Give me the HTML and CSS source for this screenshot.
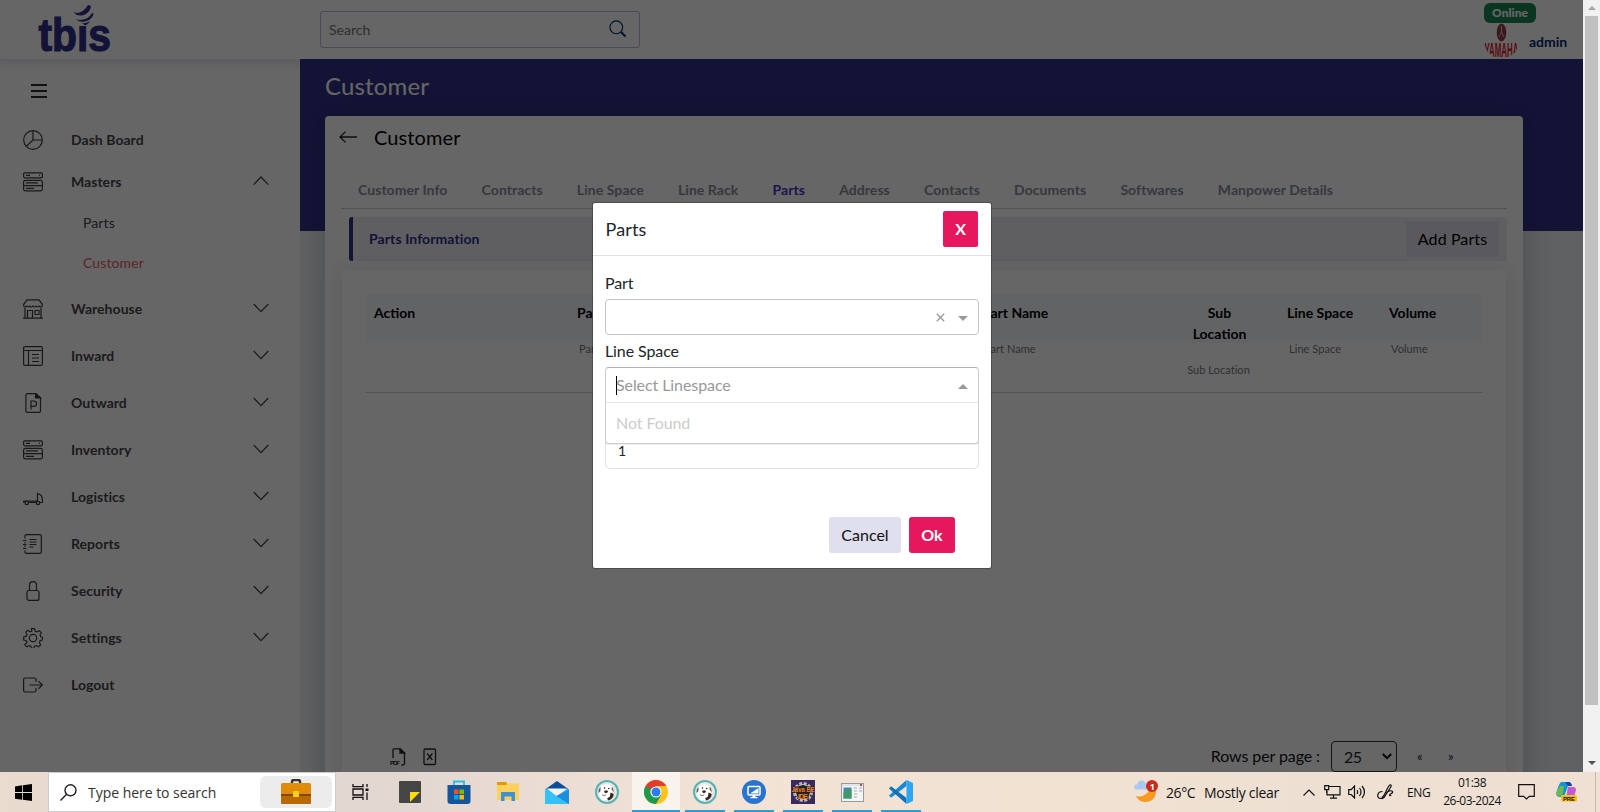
FILE: index.html
```html
<!DOCTYPE html>
<html lang="en">
<head>
<meta charset="utf-8">
<title>Customer</title>
<link rel="stylesheet" href="styles.css">
</head>
<body>
<svg class="defs" width="0" height="0">
  <symbol id="down" viewBox="0 0 16 10"><path d="M.7 1 8 8.600 15.300 1"/></symbol>
  <symbol id="up" viewBox="0 0 16 10"><path d="M.7 8.600 8 1l7.300 7.600"/></symbol>
  <symbol id="rack" viewBox="0 0 20 20"><rect x=".6" y=".8" width="18.800" height="5" rx="1.200"/><rect x=".6" y="8.300" width="18.800" height="10.600" rx="1.800"/><path d="M.6 13.600h18.800M3 3.300h4M16 3.300h1M3 10.900h12M3 16.300h8"/></symbol>
  <symbol id="beaver" viewBox="0 0 24 24"><circle cx="12" cy="12" r="11" fill="#e9e5e0" stroke="#51b5b8" stroke-width="2"/><path d="M8 5c3-1.500 7-.8 8.500 1.500 1.500 2 1 4 .5 6l-3 7-6 1c-2.500-2-4-4-4-7C4 9.500 5.500 6.500 8 5z" fill="#fff"/><path d="M5.500 7c-1.800 1.500-2.300 4-1.800 6l1.800-2z" fill="#6a5a52"/><path d="m16.500 7 1.500 1 .8 4-2-2z" fill="#6a5a52"/><circle cx="9.500" cy="8" r=".8" fill="#222"/><circle cx="13.800" cy="8.500" r=".8" fill="#222"/><path d="M9.500 10.500h3l.5 1.500-2 1.200-1.800-1z" fill="#35241f"/><path d="m15.500 12.500 3 1.500c.5 2.500-1.500 5-5 6.500l-1.500-2 3-2z" fill="#35241f"/><path d="M7 14.500c1.500 1.500 3 1.500 4.200 0" fill="none" stroke="#554a44" stroke-width=".8"/></symbol>
</svg>

<div class="screen">
  <div class="window">
    <div class="app">
      <header class="topbar">
        <div class="brand">
          <svg width="76" height="56" viewBox="0 0 76 56"><text x="2.500" y="50" font-size="46" textLength="72.500" lengthAdjust="spacingAndGlyphs">tbis</text><rect class="gap" x="42" y="13" width="11.500" height="12"/><path d="M37.500 10c2 4 10 2 14.500-6l3 1c-1 10-15 13-17.500 5z"/><path d="M40 18.500c7 1.500 13-1 16-6.500l1.500.5C57 19 47 23.500 40 18.500z"/><path d="M46 22.300c3.500 0 6-.8 8-2.400-1 2.400-3 3.600-5 4.400z"/></svg>
        </div>
        <div class="search"><span>Search</span>
          <svg width="18" height="18" viewBox="0 0 18 18"><circle cx="7.300" cy="7.300" r="6.400"/><path class="thick" d="m12 12 4.500 4.500"/></svg>
        </div>
        <div class="user">
          <span class="online">Online</span>
          <div class="who">
            <svg width="35" height="36" viewBox="0 0 35 36"><ellipse cx="17.500" cy="9.500" rx="4.800" ry="9" fill="#9a3a44"/><path d="M17.500 3v6l-2.500 5m2.500-5 2.500 5" stroke="#ccc" fill="none"/><clipPath id="av"><circle cx="17.500" cy="18" r="17.500"/></clipPath><text class="yam" clip-path="url(#av)" x=".5" y="34" textLength="34" lengthAdjust="spacingAndGlyphs">YAMAHA</text></svg>
            <b>admin</b>
          </div>
        </div>
      </header>
      <div class="body">
        <nav class="side">
          <svg class="burger" width="16" height="14" viewBox="0 0 16 14"><path d="M0 1h16M0 7h16M0 13h16"/></svg>
          <ul>
            <li class="item short"><svg class="ico" viewBox="0 0 20 20"><circle cx="10" cy="10" r="9.300"/><path d="M10 .7V10h9.300M10 10l-6.800 6.500"/></svg><span>Dash Board</span></li>
            <li class="item short"><svg class="ico"><use href="#rack"/></svg><span>Masters</span><svg class="chev"><use href="#up"/></svg></li>
            <li class="sub">Parts</li>
            <li class="sub active">Customer</li>
            <li class="item first"><svg class="ico" viewBox="0 0 20 20"><path d="M4 .8h12l3.300 4.500v1.200c0 1.800-3 2-3.200 0-.3 2-2.800 2-3 0-.3 2-2.900 2-3.100 0-.2 2-2.800 2-3.100 0-.2 2-2.700 2-3 0-.2 2-3.200 1.800-3.200 0V5.300zM2 9v10M18 9v10M0 19.200h20M4.500 19v-7.500h5V19M12 11.500h4v4h-4z"/></svg><span>Warehouse</span><svg class="chev"><use href="#down"/></svg></li>
            <li class="item"><svg class="ico" viewBox="0 0 20 20"><rect x=".6" y=".6" width="18.800" height="18.800" rx="1.500"/><path d="M.6 4.500h18.800M5.500 4.500v15M9 8.500h7M9 12h7M9 15.500h7"/></svg><span>Inward</span><svg class="chev"><use href="#down"/></svg></li>
            <li class="item"><svg class="ico" viewBox="0 0 20 20"><path d="M4.500.6H13L17.500 5v13c0 .8-.5 1.400-1.300 1.400H4.400c-.8 0-1.500-.6-1.500-1.400V2c0-.8.700-1.400 1.600-1.400zM8 16.500V8h2.500c4 0 4 5.300 0 5.300H8"/><path class="solid" d="M12.500.6V5h5z"/></svg><span>Outward</span><svg class="chev"><use href="#down"/></svg></li>
            <li class="item"><svg class="ico"><use href="#rack"/></svg><span>Inventory</span><svg class="chev"><use href="#down"/></svg></li>
            <li class="item"><svg class="ico" viewBox="0 0 20 20"><path d="M.5 14h14V6.500c3 .5 5 3 5 7v2h-2.600M5.600 15.300h7.500M.5 14v1.200h1.300"/><circle cx="3.700" cy="16" r="1.700"/><circle cx="15" cy="16" r="1.700"/></svg><span>Logistics</span><svg class="chev"><use href="#down"/></svg></li>
            <li class="item"><svg class="ico" viewBox="0 0 20 20"><path d="M2 4.500V2C2 1.200 2.600.6 3.400.6h13.400c.9 0 1.500.6 1.500 1.400v16c0 .8-.6 1.400-1.500 1.400H3.400c-.8 0-1.400-.6-1.400-1.400v-1.500M2 8v1.500M2 11.500V13M0 6.500h3.500M0 10.500h3.500M0 14.500h3.500M6.500 5.500h7M6.500 8h7M6.500 10.500h7M6.500 13h4"/></svg><span>Reports</span><svg class="chev"><use href="#down"/></svg></li>
            <li class="item"><svg class="ico" viewBox="0 0 20 20"><rect x="4" y="9.500" width="12" height="9.900" rx="2"/><path d="M6.500 9.500V4c0-4.500 7-4.500 7 0v5.500"/></svg><span>Security</span><svg class="chev"><use href="#down"/></svg></li>
            <li class="item"><svg class="ico" viewBox="0 0 20 20"><circle cx="10" cy="10" r="3.700"/><path d="M8.500.7h3l.8 2.500 1.600.7 2.400-1.200 2 2-1.200 2.400.7 1.600 1.600.6v1.700l-.2 1-2.100.8-.7 1.600 1.200 2.400-2 2-2.400-1.200-1.600.7-.8 2h-2l-1-2-1.600-.7-2.400 1.200-2-2L4 14.400l-.7-1.600-2.600-.8V8.900l2.600-.7L4 6.600 2.800 4.200l2-2 2.400 1.700 1.600-.7z"/></svg><span>Settings</span><svg class="chev"><use href="#down"/></svg></li>
            <li class="item"><svg class="ico" viewBox="0 0 20 20"><path d="M13 7V4.500c0-.9-.7-1.500-1.500-1.500H2C1.200 3 .6 3.600.6 4.500v11c0 .9.600 1.500 1.400 1.500h9.500c.8 0 1.500-.6 1.500-1.500V13M6.500 10h12.800M15.500 6.200l4 3.800-4 3.800"/></svg><span>Logout</span></li>
          </ul>
        </nav>
        <main class="main">
          <h1>Customer</h1>
          <section class="card">
            <div class="cardhead"><svg width="18" height="12" viewBox="0 0 18 12"><path d="M18 6H1M6.500.6 1 6l5.500 5.400"/></svg><h2>Customer</h2></div>
            <div class="tabs"><span>Customer Info</span><span>Contracts</span><span>Line Space</span><span>Line Rack</span><span class="on">Parts</span><span>Address</span><span>Contacts</span><span>Documents</span><span>Softwares</span><span>Manpower Details</span></div>
            <div class="info"><b>Parts Information</b><span class="add">Add Parts</span></div>
            <div class="panel">
              <div class="row head"><b>Action</b><b>Part No</b><b>Part Name</b><b class="mid">Sub<br>Location</b><b>Line Space</b><b>Volume</b></div>
              <div class="row filters"><span></span><span>Part No</span><span>Part Name</span><span class="mid low">Sub Location</span><span>Line Space</span><span>Volume</span></div>
              <div class="pager">
                <svg class="pdf" width="16" height="18" viewBox="0 0 16 18"><path d="M3 10V2c0-.7.400-1.200 1-1.200h6.500L14.500 5v10.500c0 .8-.5 1.500-1.500 1.500h-1.500"/><path class="solid" d="M10 1v4h4.500z"/><text x="0" y="16.500" textLength="10">PDF</text></svg>
                <svg width="14" height="18" viewBox="0 0 14 18"><rect x="1" y="1" width="11.500" height="15.500" rx="1.200"/><path d="m4.200 5.500 5.200 6.500M9.400 5.500 4.200 12"/></svg>
                <span class="rpp">Rows per page :</span>
                <span class="size">25<svg width="10" height="7" viewBox="0 0 10 7"><path d="m.8 1 4.200 4.200L9.200 1"/></svg></span>
                <span class="pg">«</span><span class="pg">»</span>
              </div>
            </div>
          </section>
        </main>
      </div>
      <div class="shade"></div>
      <div class="modal">
        <div class="mhead"><span>Parts</span><button class="x">X</button></div>
        <div class="mbody">
          <label>Part</label>
          <div class="select"><span></span><svg width="9" height="9" viewBox="0 0 9 9"><path d="m.8.8 7.400 7.400m0-7.400L.8 8.200"/></svg><i class="tri"></i></div>
          <label>Line Space</label>
          <div class="select open"><i class="caret"></i><span class="ph">Select Linespace</span><i class="tri upward"></i><div class="drop">Not Found</div></div>
          <div class="qty">1</div>
          <div class="acts"><button class="cancel">Cancel</button><button class="ok">Ok</button></div>
        </div>
      </div>
    </div>
    <div class="scroll"><i class="sup"></i><div class="thumb"></div><i class="sdown"></i></div>
  </div>

  <footer class="task">
    <svg class="win" width="17" height="17" viewBox="0 0 17 17"><path d="M0 2.400 7 1.300v6.800H0zM7.800 1.200 17 0v8.100H7.800zM0 8.900h7v6.800l-7-1zM7.800 8.900H17V17l-9.200-1.300z"/></svg>
    <div class="find">
      <svg width="17" height="17" viewBox="0 0 17 17"><circle cx="10.500" cy="6.300" r="5.500"/><path d="M6.600 10.300.5 16.500"/></svg>
      <span>Type here to search</span>
      <div class="pill"><svg width="30" height="26" viewBox="0 0 30 26"><path d="M11 5V2.500q0-1.500 2-1.500h4q2 0 2 1.500V5" fill="none" stroke="#333" stroke-width="2.500"/><rect y="4" width="30" height="21" rx="1.500" fill="#e08c0a"/><path d="M0 15h30v2H0z" fill="#854400"/><path d="M0 17h30v6.500q0 1.500-1.500 1.500h-27Q0 25 0 23.500z" fill="#b86a00"/><rect x="12" y="12" width="6" height="6" rx="1" fill="#ffcf1a"/></svg></div>
    </div>
    <div class="apps">
      <div class="slot plain"><svg width="17" height="16" viewBox="0 0 17 16" fill="none" stroke="#111" stroke-width="1.300"><path d="M1 0v2.700h10V0M1 16v-2.700h10V16M1 5h10v6H1zM15 0v3M15 8.500V16"/><path d="M13.500 4.500h3v2.500h-3z" fill="#111" stroke="none"/></svg></div>
      <div class="slot plain"><svg width="22" height="22" viewBox="0 0 22 22"><rect width="22" height="22" rx="1" fill="#454545"/><path d="M11 21V11h10z" fill="#fd0"/></svg></div>
      <div class="slot plain"><svg width="24" height="24" viewBox="0 0 24 24"><path d="M7 6V1.500h10V6" fill="none" stroke="#29bdf0" stroke-width="1.800"/><path d="M.5 5h23v16q0 3-3 3h-17q-3 0-3-3z" fill="#15569b"/><path d="M7 9.500h4.500V14H7z" fill="#f25022"/><path d="M12.500 9.500H17V14h-4.500z" fill="#7fba00"/><path d="M7 15h4.500v4.500H7z" fill="#00a4ef"/><path d="M12.500 15H17v4.500h-4.500z" fill="#ffb900"/></svg></div>
      <div class="slot plain"><svg width="22" height="20" viewBox="0 0 22 20"><path d="M0 0h9l2 3H0z" fill="#dd9a0d"/><path d="M0 3h9l2-1.500h11V18H0z" fill="#fdd15c"/><path d="M4 19v-8q0-1 1-1h12q1 0 1 1v8h-3.500v-4.500h-7V19z" fill="#3b93d6"/></svg></div>
      <div class="slot plain"><svg width="24" height="23" viewBox="0 0 24 23"><path d="m0 8.500 12-8.500 12 8.500z" fill="#0a4d9c"/><path d="M0 8.500h24V23H0z" fill="#35c1f5"/><path d="M2 7.500h20l-10 8z" fill="#f3f3f3"/><path d="M24 8.500V23L11 15z" fill="#1b8fdd"/></svg></div>
      <div class="slot plain"><svg width="24" height="24"><use href="#beaver"/></svg></div>
      <div class="slot current"><svg width="24" height="24" viewBox="0 0 24 24"><circle cx="12" cy="12" r="12" fill="#fcc31e"/><path d="M12 12 1.600 6A12 12 0 0 0 12 24l5.200-9z" fill="#1e9a4c"/><path d="M1.600 6a12 12 0 0 1 20.800 0H12l-5.200 9z" fill="#e33b2e"/><path d="M1.600 6 6.800 15 12 12z" fill="#1e9a4c"/><circle cx="12" cy="12" r="5.600" fill="#fff"/><circle cx="12" cy="12" r="4.500" fill="#2a7df0"/></svg></div>
      <div class="slot"><svg width="24" height="24"><use href="#beaver"/></svg></div>
      <div class="slot"><svg width="24" height="24" viewBox="0 0 24 24"><circle cx="12" cy="12" r="12" fill="#2874cf"/><rect x="6" y="6.500" width="12" height="8.500" rx="1" fill="#2874cf" stroke="#fff" stroke-width="1.500"/><path d="M8 13.500 16.500 8v5.500zM10.500 15h3v2h2v1.200h-7V17h2z" fill="#fff"/></svg></div>
      <div class="slot"><svg width="24" height="24" viewBox="0 0 24 24"><rect width="24" height="24" fill="#392a5e"/><circle cx="12" cy="12" r="8.500" fill="#222" stroke="#b8b4b8" stroke-width="3" stroke-dasharray="3 1.500"/><circle cx="12" cy="12" r="7.500" fill="none" stroke="#bbb"/><path d="M1 6h22v7h-5v6H6v-6H1z" fill="#2c2020" opacity=".6"/><text class="jee" x=".5" y="12" textLength="23" lengthAdjust="spacingAndGlyphs">Java EE</text><text class="jee" x="7" y="18.500" textLength="10">IDE</text></svg></div>
      <div class="slot"><svg width="23" height="19" viewBox="0 0 23 19"><rect x=".5" y=".5" width="22" height="18" fill="#f4f4f4" stroke="#969ba1"/><path d="M1 1h21v2H1z" fill="#dfe4ea"/><path d="M2.500 4.500h8v11h-8z" fill="#4a8aa0"/><path d="M2.500 15.500v-6l8-3v9z" fill="#3f9a68"/><path d="M13 5h3M13 8h3M13 11h3M13 14h3M18 5h3M18 8h3" stroke="#aaa"/><path d="M19 1h2v2h-2z" fill="#b44"/></svg></div>
      <div class="slot"><svg width="24" height="24" viewBox="0 0 24 24"><path d="M17.500 0 0 15.500l2 2.200L17.500 6z" fill="#1489d2"/><path d="M17.500 24 0 8.500l2-2.200L17.500 18z" fill="#0b71b8"/><path d="m17.500 0 6.500 3v18l-6.500 3z" fill="#2aa6f2"/></svg></div>
    </div>
    <div class="tray">
      <svg class="weather" width="25" height="24" viewBox="0 0 25 24"><path d="M2 16c5 2 11-1 14-7 3-1 6-1 6 3 0 6-5 10-10 10-5 0-8-2-10-6z" fill="#f59b22"/><path d="M2 9.500q-2-.5-2-2.500 0-2.500 3-2.500Q4 .5 7.500.5t4.500 4l2.500 2q0 3-3 3z" fill="#a9c9f3"/><circle cx="18" cy="6" r="6" fill="#c42b1c"/><text x="15.800" y="9.500">1</text></svg>
      <span class="temp">26°C</span><span class="sky">Mostly clear</span>
      <svg class="t1" width="12" height="7" viewBox="0 0 12 7"><path d="M.5 6.500 6 1l5.500 5.500"/></svg>
      <svg class="t2" width="17" height="14" viewBox="0 0 17 14"><path d="M5 1.500h11v8.300H3V6M9.500 10v3M6 13.200h7M.7.700h4v4h-4zM2.700 4.700V8"/></svg>
      <svg class="t3" width="18" height="14" viewBox="0 0 18 14"><path d="M.7 4.700h2.500L6.500 1v12L3.200 9.500H.7zM9 5q1.300 2 0 4M11.500 3q3 4 0 8M14 1q5 6 0 12"/></svg>
      <svg class="t4" width="17" height="16" viewBox="0 0 17 16"><path d="M5.500 7.500c-6 0-6 7-2 7 3 0 4-5 8-12 2-3 3.500-1.500 2 1L7 13.500l-1.500.8.300-2M9.500 9c1-2 5-3 6-1.500s-3 2.500-3 3.500 1 1 1.500 0"/></svg>
      <span class="lang">ENG</span>
      <div class="clock"><span>01:38</span><span>26-03-2024</span></div>
      <svg class="t5" width="17" height="16" viewBox="0 0 17 16"><path d="M.7.700h15.600v11.600h-5L8.500 15l-2.800-2.700h-5z"/></svg>
      <svg class="pilot" width="21" height="20" viewBox="0 0 21 20"><path d="M5 0h8q2 0 3 4h-4L8 15H4q-3 0-4-3Q3 1 5 0z" fill="#1693d8"/><path d="M4 4h4L6 14H3Q0 13 0 11z" fill="#6bbd45"/><path d="M12 5h5q3 0 3 3-2 8-4 8h-6z" fill="#c65ad5"/><path d="M9 0h4q2 0 3 4h-4z" fill="#1246a8"/><rect x="5" y="13" width="16" height="6.500" rx="1.500" fill="#fdbf12"/><text x="7" y="18.500" textLength="12">PRE</text></svg>
      <i class="edge"></i>
    </div>
  </footer>
</div>
</body>
</html>
```
FILE: styles.css
```css
* { box-sizing: border-box; }
body { margin: 0; font-family: Lato, sans-serif; color: #212529; overflow: hidden; }
.defs { position: absolute; }
svg { flex: none; }
h1, h2, ul { margin: 0; padding: 0; font-weight: 400; list-style: none; }
.screen { width: 1600px; height: 812px; display: flex; flex-direction: column; }
.window { height: 772px; display: flex; }
.app { position: relative; width: 1583px; height: 772px; overflow: hidden; display: flex; flex-direction: column; background: #edf1f5; }

.topbar { height: 59px; flex: none; background: #fff; display: flex; position: relative; box-shadow: 0 2px 16px rgba(1, 41, 112, .1); }
.brand { width: 320px; padding-left: 36px; padding-top: 1px; }
.brand text { font-family: "Liberation Sans", sans-serif; font-weight: 700; stroke: #30308a; stroke-width: 1.2; }
.brand svg { fill: #30308a; }
.brand .gap { fill: #fff; }
.search { width: 320px; height: 37px; margin-top: 11px; border: 1px solid #b9bcd4; border-radius: 3px; display: flex; justify-content: space-between; align-items: center; padding: 0 12px 0 8px; font-size: 14px; color: #757575; }
.search svg { fill: none; stroke: #012970; stroke-width: 1.1; margin-top: -2px; }
.search .thick { stroke-width: 2; }
.user { margin-left: auto; width: 99px; padding-top: 3px; display: flex; flex-direction: column; align-items: flex-start; }
.online { width: 52px; height: 20px; border-radius: 6px; background: #198754; color: #fff; font-size: 12px; font-weight: 900; line-height: 20px; text-align: center; }
.who { display: flex; align-items: center; gap: 10px; font-size: 14px; color: #012970; }
.yam { font: 700 20px "Liberation Sans", sans-serif; fill: #e02028; }

.body { flex: 1; display: flex; min-height: 0; }
.side { width: 300px; flex: none; background: #fff; padding-top: 25px; box-shadow: inset 0 8px 10px -6px rgba(1, 41, 112, .08); }
.burger { display: block; margin: 0 0 21px 31px; stroke: #2c2c2c; stroke-width: 2; }
.item { height: 47px; display: flex; align-items: center; padding: 0 31px 0 23px; font-size: 14px; font-weight: 700; color: #474749; }
.item.short { height: 42px; }
.item.first { margin-top: 3px; }
.item span { margin-left: 28px; flex: 1; padding-bottom: 2px; letter-spacing: .04px; }
.ico { width: 20px; height: 20px; margin-top: -1px; fill: none; stroke: #3e3e40; stroke-width: 1.2; }
.ico .solid, .pager .solid { fill: #222; }
.chev { width: 16px; height: 10px; fill: none; stroke: #444; stroke-width: 1.3; margin-top: -3px; }
.sub { height: 40px; line-height: 40px; padding-left: 83px; font-size: 14px; letter-spacing: .1px; color: #48484a; }
.sub.active { color: #ea5b5e; }

.main { flex: 1; min-width: 0; padding: 0 60px 0 25px; background: linear-gradient(#313188 172px, transparent 172px); }
.main h1 { height: 57px; line-height: 54px; font-size: 24px; letter-spacing: .15px; color: #fff; }
.card { height: 700px; background: #fff; border-radius: 4px; padding: 0 16px; box-shadow: 0 0 30px rgba(20, 35, 60, .22); }
.cardhead { height: 44px; display: flex; align-items: center; gap: 17px; }
.cardhead svg { margin-left: -2px; margin-top: -2px; fill: none; stroke: #222; stroke-width: 1.3; }
.cardhead h2 { font-size: 20px; color: #000; padding-bottom: 2px; letter-spacing: .1px; }
.tabs { height: 49px; border-bottom: 1px solid #c8cad0; display: flex; gap: 34.200px; padding: 21px 0 0 17px; font-size: 14px; letter-spacing: .06px; font-weight: 700; color: #888d99; white-space: nowrap; }
.tabs .on { color: #4732c9; }
.info { height: 44px; margin: 8px 0 0 8px; background: #edeef3; border-left: 4px solid #313188; border-radius: 3px 0 0 3px; padding: 0 8px 0 16px; display: flex; justify-content: space-between; align-items: center; font-size: 14px; letter-spacing: .1px; color: #313188; }
.info b { padding-bottom: 2px; }
.add { width: 93px; height: 36px; background: #dfdeec; border-radius: 4px; color: #000; font-size: 16px; line-height: 36px; text-align: center; }
.panel { height: 560px; margin: 9px 1px 0; padding: 24px 24px 0; border-radius: 4px; box-shadow: 0 0 20px rgba(10, 20, 40, .12); display: flex; flex-direction: column; }
.row { display: grid; grid-template-columns: 203px 405px 195px 110px 102px 84px; flex: none; line-height: 21px; padding-left: 8px; }
.row.head { height: 49px; background: #f6f7fb; padding-top: 8px; font-size: 14px; color: #000; }
.filters { height: 50px; border-bottom: 1px solid #ccced2; font-size: 11px; color: #75777b; }
.filters span { margin-top: -5px; padding-left: 2px; letter-spacing: .05px; }
.row .mid { text-align: center; padding-right: 34px; padding-left: 8px; }
.head .mid { padding-right: 33px; }
.row .low { margin-top: 16px; padding-right: 35px; }
.pager { margin-top: 348px; height: 31px; flex: none; display: flex; align-items: center; padding-left: 24px; }
.pager svg { fill: none; stroke: #292929; stroke-width: 1.3; margin-right: 17px; }
.pager .pdf text { font: 700 6px "Liberation Sans", sans-serif; fill: #222; stroke: none; }
.rpp { margin-left: auto; font-size: 16px; letter-spacing: -.1px; padding-bottom: 2px; color: #111; }
.size { width: 66px; height: 31px; margin: 0 18px 0 11px; border: 1px solid #333; border-radius: 4px; display: flex; align-items: center; justify-content: space-between; padding: 0 4px 0 12px; font-size: 16px; letter-spacing: -.5px; color: #212529; }
.size svg { margin: 0; stroke: #111; stroke-width: 2; }
.pg { width: 31px; padding: 0 0 2px 2px; font-size: 13px; color: #222; }
.pg:last-child { width: 36px; color: #1f1f5c; }
.shade { position: absolute; inset: 0; background: rgba(0, 0, 0, .6); }

.modal { position: absolute; left: 593px; top: 203px; width: 398px; height: 365px; background: #fff; border-radius: 2px; box-shadow: 0 0 0 1px rgba(0, 0, 0, .25); }
.mhead { height: 53px; border-bottom: 1px solid #dee2e6; display: flex; align-items: center; justify-content: space-between; padding: 0 13px 0 12.500px; font-size: 18px; letter-spacing: .15px; }
button { border: 0; height: 36px; padding: 0 0 2px; font: 400 16px Lato, sans-serif; border-radius: 3px; }
.x { width: 35px; background: #e6175c; color: #fff; font-weight: 700; border-radius: 2px; }
.mbody { padding: 16px 12px 0; display: flex; flex-direction: column; }
label { font-size: 16px; line-height: 22px; height: 27px; letter-spacing: -.1px; }
.select { height: 36px; border: 1px solid #c4c4c4; border-radius: 4px; display: flex; align-items: center; padding: 0 10px; color: #999; font-size: 16px; letter-spacing: -.08px; position: relative; }
.select + label { margin-top: 5px; }
.select > span { flex: 1; }
.select svg { stroke: #999; stroke-width: 1.3; margin-right: 13px; }
.tri { border: 5px solid transparent; border-top-color: #999; border-bottom: 0; margin-top: 2px; }
.tri.upward { border-top: 0; border-bottom: 5px solid #999; }
.open { border-radius: 4px 4px 0 0; border-color: #b3b3b3 #ccc #e3e3e3; }
.caret { width: 1px; height: 19px; margin-right: -1px; background: #000; }
.ph { padding-bottom: 2px; }
.drop { position: absolute; left: -1px; right: -1px; top: 34px; height: 42px; background: #fff; border: 1px solid #ccc; border-top-color: #e6e6e6; border-radius: 0 0 4px 4px; box-shadow: 0 1px 0 rgba(0, 0, 0, .06); line-height: 40px; padding-left: 10px; color: #ccc; z-index: 1; }
.qty { margin-top: 28px; height: 38px; border: 1px solid #dee2e6; border-radius: 5px; line-height: 37px; padding-left: 12px; font-size: 14px; }
.acts { margin: 48px 24px 0; display: flex; justify-content: flex-end; gap: 8px; }
.cancel { width: 72px; background: #e0dfed; color: #111; }
.ok { width: 46px; background: #e6175c; color: #fff; font-weight: 700; }

.scroll { width: 17px; background: #f1f1f1; display: flex; flex-direction: column; align-items: center; padding: 6px 0 7px; }
.sup { border: 4px solid transparent; border-top: 0; border-bottom-color: #a3a3a3; }
.thumb { width: 13px; height: 689px; margin-top: 6px; background: #c1c1c1; }
.sdown { border: 4px solid transparent; border-bottom: 0; border-top-color: #505050; margin-top: auto; }

.task { height: 40px; display: flex; align-items: center; background: linear-gradient(90deg, #eadbcf, #e2d7d1 25%, #f3e3d6 45%, #f2e2d2 65%, #ede0d2 82%, #f0dfd3); font-family: "Open Sans", sans-serif; color: #111; }
.win { margin: 0 16px 0 15px; }
.find { width: 288px; height: 40px; background: #fff; border: 1px solid #ccc; display: flex; align-items: center; padding: 0 3px 0 11px; font-size: 14px; color: #333; }
.find > svg { fill: none; stroke: #222; stroke-width: 1.4; }
.find > span { margin-left: 11px; letter-spacing: -.03px; white-space: nowrap; }
.pill { margin-left: auto; width: 72px; height: 32px; border-radius: 6px; background: #ececec; display: flex; align-items: center; justify-content: center; }
.apps { display: flex; height: 40px; }
.slot { width: 40px; height: 40px; margin-right: 9px; display: flex; align-items: center; justify-content: center; border-bottom: 2px solid #2c9dd0; }
.slot svg { margin-top: 2px; }
.slot.plain { border-color: transparent; width: 49.200px; margin: 0; }
.slot.current { background: #f9f3ee; width: 48px; margin: 0 5px 0 1px; }
.jee { font: 700 7px "Liberation Sans", sans-serif; fill: #f08020; }
.tray { margin-left: auto; height: 40px; width: 466px; display: flex; align-items: center; font-size: 14px; white-space: nowrap; }
.tray svg { fill: none; stroke: #111; stroke-width: 1.2; }
.tray .weather, .tray .pilot { stroke: none; }
.weather text { font-size: 9px; font-weight: 700; fill: #fff; }
.temp { width: 38px; margin-left: 7px; letter-spacing: -.4px; }
.sky { width: 99px; letter-spacing: -.3px; }
.t2 { margin-left: 9px; }
.t3 { margin-left: 7px; }
.t4 { margin-left: 11px; }
.lang { width: 36px; margin-left: 13px; font-size: 12px; letter-spacing: -.3px; }
.clock { width: 58px; display: flex; flex-direction: column; align-items: center; font-size: 12px; line-height: 18px; letter-spacing: -.5px; }
.t5 { margin-left: 17px; }
.pilot { margin-left: 21px; }
.pilot text { font: 700 6px "Liberation Sans", sans-serif; fill: #111; }
.edge { height: 40px; margin-left: auto; margin-right: 4px; border-left: 1px solid #c5b9ae; }
```
